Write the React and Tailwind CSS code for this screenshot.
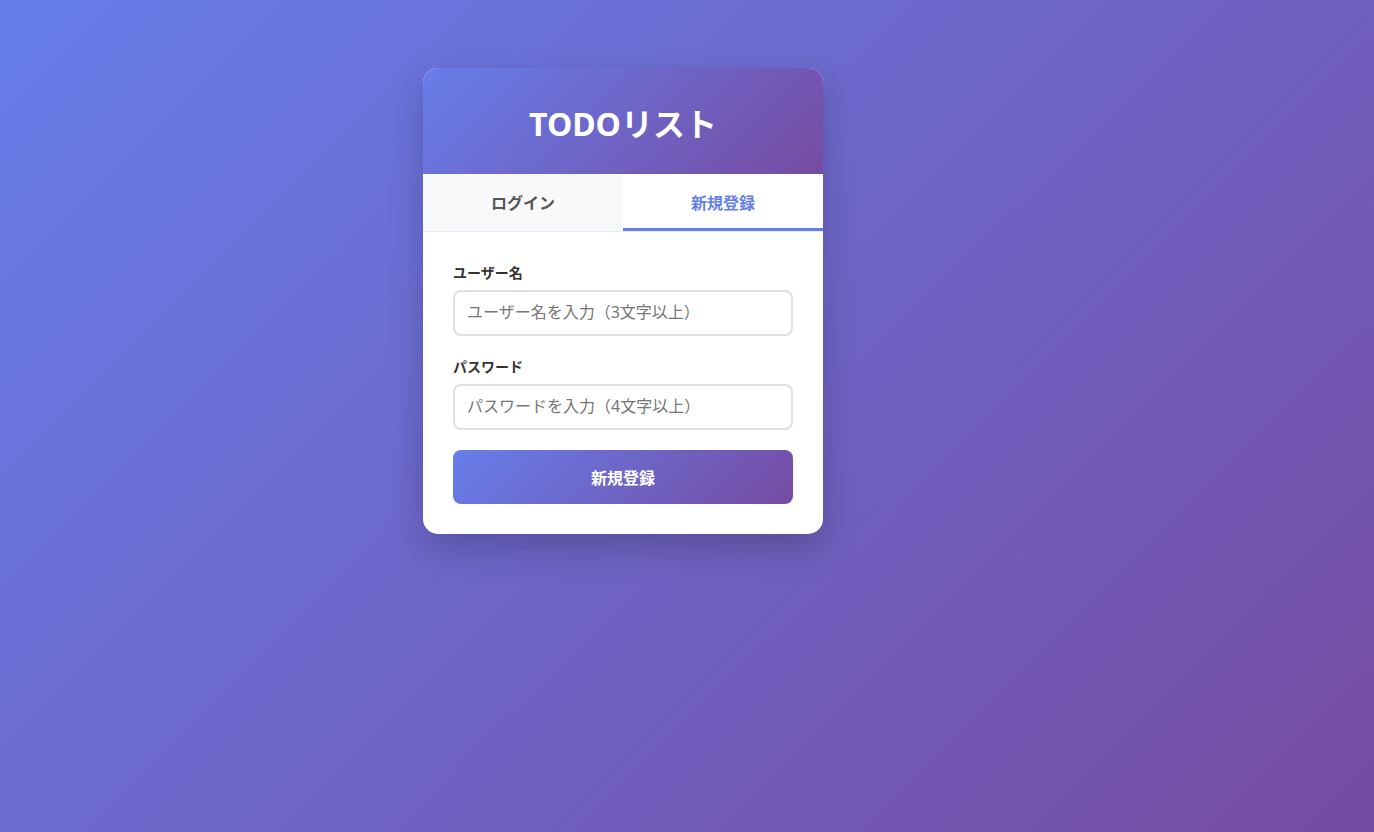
import { useState } from 'react';

const App = () => {
  const [tab, setTab] = useState('register');
  const [username, setUsername] = useState('');
  const [password, setPassword] = useState('');

  return (
    <div
      className="min-h-screen w-full bg-[linear-gradient(135deg,#667eea_0%,#764ba2_100%)] pt-[68px]"
      style={{ fontFamily: '"Noto Sans", "Noto Sans CJK JP", sans-serif' }}
    >
      <div className="mx-auto max-w-[528px]">
        <div className="w-[400px] overflow-hidden rounded-[15px] bg-white shadow-[0_15px_35px_rgba(0,0,0,0.2)]">
          <div className="flex h-[106px] items-center justify-center bg-[linear-gradient(135deg,#667eea_0%,#764ba2_100%)] pt-[5px]">
            <h1 className="text-[32px] font-bold leading-none text-white">TODOリスト</h1>
          </div>

          <div className="flex border-b border-[#e9ecef]">
            <button
              onClick={() => setTab('login')}
              className={`h-[57px] flex-1 border-b-[3px] pt-[4px] text-[16px] font-bold ${
                tab === 'login' ? 'border-[#667eea] bg-white text-[#667eea]' : 'border-transparent bg-[#f8f9fa] text-[#555]'
              }`}
            >
              ログイン
            </button>
            <button
              onClick={() => setTab('register')}
              className={`h-[57px] flex-1 border-b-[3px] pt-[3px] text-[16px] font-bold ${
                tab === 'register' ? 'border-[#667eea] bg-white text-[#667eea]' : 'border-transparent bg-[#f8f9fa] text-[#555]'
              }`}
            >
              新規登録
            </button>
          </div>

          <form className="p-[30px]" onSubmit={(e) => e.preventDefault()}>
            <div className="mb-5">
              <label className="mb-[6px] block text-[14px] font-bold leading-[22px] text-[#333]">ユーザー名</label>
              <input
                type="text"
                value={username}
                onChange={(e) => setUsername(e.target.value)}
                placeholder="ユーザー名を入力（3文字以上）"
                className="h-[46px] w-full rounded-[8px] border-2 border-[#e0e0e0] px-[12px] pb-[2px] text-[16px] text-[#333] outline-none placeholder:text-[#757575]"
              />
            </div>
            <div className="mb-5">
              <label className="mb-[6px] block text-[14px] font-bold leading-[22px] text-[#333]">パスワード</label>
              <input
                type="password"
                value={password}
                onChange={(e) => setPassword(e.target.value)}
                placeholder="パスワードを入力（4文字以上）"
                className="h-[46px] w-full rounded-[8px] border-2 border-[#e0e0e0] px-[12px] pb-[2px] text-[16px] text-[#333] outline-none placeholder:text-[#757575]"
              />
            </div>
            <button
              type="submit"
              className="h-[54px] w-full rounded-[8px] bg-[linear-gradient(135deg,#667eea_0%,#764ba2_100%)] pt-[2px] text-[16px] font-bold text-white"
            >
              {tab === 'login' ? 'ログイン' : '新規登録'}
            </button>
          </form>
        </div>
      </div>
    </div>
  );
};

export default App;
